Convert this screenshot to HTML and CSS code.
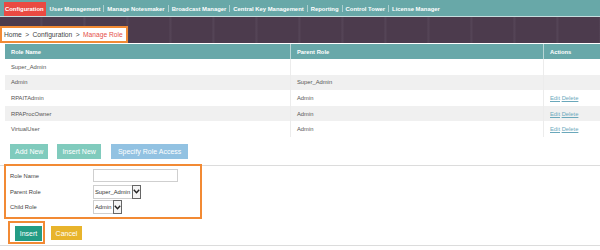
FILE: index.html
```html
<!DOCTYPE html>
<html>
<head>
    <title>Manage Role</title>
    <link rel="stylesheet" href="styles.css">
</head>
<body>
    <nav class="topnav">
        <a href="#" class="active">Configuration</a>
        <a href="#">User Management</a>
        <span class="sep"></span>
        <a href="#">Manage Notesmaker</a>
        <span class="sep"></span>
        <a href="#">Broadcast Manager</a>
        <span class="sep"></span>
        <a href="#">Central Key Management</a>
        <span class="sep"></span>
        <a href="#">Reporting</a>
        <span class="sep"></span>
        <a href="#">Control Tower</a>
        <span class="sep"></span>
        <a href="#">License Manager</a>
    </nav>

    <div class="banner">
        <div class="breadcrumb">
            <span>Home</span><span class="arrow">&gt;</span><span>Configuration</span><span class="arrow">&gt;</span><span class="current">Manage Role</span>
        </div>
    </div>

    <table class="roles">
        <thead>
            <tr>
                <th class="col-name">Role Name</th>
                <th class="col-parent">Parent Role</th>
                <th class="col-actions">Actions</th>
            </tr>
        </thead>
        <tbody>
            <tr>
                <td>Super_Admin</td>
                <td></td>
                <td></td>
            </tr>
            <tr>
                <td>Admin</td>
                <td>Super_Admin</td>
                <td></td>
            </tr>
            <tr>
                <td>RPAITAdmin</td>
                <td>Admin</td>
                <td><a href="#">Edit</a> <a href="#">Delete</a></td>
            </tr>
            <tr>
                <td>RPAProcOwner</td>
                <td>Admin</td>
                <td><a href="#">Edit</a> <a href="#">Delete</a></td>
            </tr>
            <tr>
                <td>VirtualUser</td>
                <td>Admin</td>
                <td><a href="#">Edit</a> <a href="#">Delete</a></td>
            </tr>
        </tbody>
    </table>

    <div class="toolbar">
        <button class="btn btn-mint">Add New</button>
        <button class="btn btn-mint">Insert New</button>
        <button class="btn btn-sky">Specify Role Access</button>
    </div>

    <div class="form-section">
        <div class="role-form">
            <label for="role-name">Role Name</label>
            <input type="text" id="role-name">

            <label for="parent-role">Parent Role</label>
            <div class="pick">
                <select id="parent-role">
                    <option>Super_Admin</option>
                    <option>Admin</option>
                </select>
                <span class="pick-arrow"><svg width="7" height="5" viewBox="0 0 7 5"><path d="M0.8 0.8 L3.5 3.8 L6.2 0.8" fill="none" stroke="#222" stroke-width="1.4"/></svg></span>
            </div>

            <label for="child-role">Child Role</label>
            <div class="pick">
                <select id="child-role">
                    <option>Admin</option>
                </select>
                <span class="pick-arrow"><svg width="7" height="5" viewBox="0 0 7 5"><path d="M0.8 0.8 L3.5 3.8 L6.2 0.8" fill="none" stroke="#222" stroke-width="1.4"/></svg></span>
            </div>
        </div>
    </div>

    <div class="actions-bar">
        <div class="insert-frame">
            <button class="btn btn-teal">Insert</button>
        </div>
        <button class="btn btn-gold">Cancel</button>
    </div>
</body>
</html>
```

FILE: styles.css
```css
body {
    margin: 0;
    font-family: "Liberation Sans", Arial, sans-serif;
    background-color: #fff;
    color: #555;
}

/* top navigation */
.topnav {
    display: flex;
    height: 14px;
    padding: 2px 0 0 4px;
    background-color: #68a8a8;
    border-bottom: 1px solid #c6dede;
}

.topnav a {
    display: flex;
    align-items: center;
    padding: 0 3px;
    font-size: 5.9px;
    font-weight: bold;
    color: #fff;
    text-decoration: none;
    white-space: nowrap;
}

.topnav a.active {
    padding: 0 2px 0 1px;
    margin-right: 1px;
    background-color: #ea4a42;
}

.topnav .sep {
    align-self: center;
    width: 1px;
    height: 7px;
    margin-top: -1px;
    background-color: rgba(255, 255, 255, 0.45);
}

/* dark banner with breadcrumb */
.banner {
    display: flex;
    align-items: flex-end;
    height: 26px;
    background-color: #4e3d4f;
    background-image: repeating-linear-gradient(90deg, #4c3b4d 0, #4c3b4d 40px, #564658 41px, #4e3d4f 43px);
}

.breadcrumb {
    display: flex;
    align-items: center;
    height: 13px;
    padding: 0 3px 0 2px;
    background-color: #fff;
    border: 2px solid #f28a34;
    font-size: 6.7px;
    color: #444;
}

.breadcrumb .arrow {
    padding: 0 3.4px;
}

.breadcrumb .current {
    color: #e5504a;
}

/* roles table */
.roles {
    width: 595px;
    margin: 1px 0 0 5px;
    border-collapse: collapse;
    font-size: 5.8px;
}

.roles th {
    height: 15px;
    padding: 0 6px;
    background-color: #68a8a9;
    color: #fff;
    font-weight: bold;
    text-align: left;
    border-left: 1px solid #b9d6d6;
}

.roles th:first-child,
.roles td:first-child {
    border-left: none;
}

.roles .col-name {
    width: 273px;
}

.roles .col-parent {
    width: 240px;
}

.roles td {
    height: 15.6px;
    padding: 0 6px;
    border-left: 1px solid #ececec;
    color: #555;
}

.roles tbody tr:nth-child(even) td {
    background-color: #f0f0f0;
}

.roles td a {
    color: #6aa8bb;
}

/* buttons */
.toolbar {
    display: flex;
    gap: 9px;
    padding: 7px 0 0 10px;
    height: 15px;
}

.btn {
    height: 15px;
    padding: 0 5px;
    border: none;
    font-family: "Liberation Sans", Arial, sans-serif;
    font-size: 7px;
    color: #fff;
    cursor: pointer;
}

.btn-mint {
    background-color: #80cbbd;
}

.btn-sky {
    margin-left: 1px;
    padding: 0 7px;
    background-color: #92c2e2;
}

.btn-teal {
    width: 27px;
    padding: 0;
    background-color: #239c84;
}

.btn-gold {
    width: 31px;
    height: 14px;
    padding: 0;
    margin-top: 5px;
    background-color: #e8b42c;
}

/* role form */
.form-section {
    margin-top: 6px;
    border-top: 1px solid #dcdcdc;
}

.role-form {
    display: grid;
    grid-template-columns: 83px auto;
    grid-auto-rows: 15.7px;
    align-items: center;
    width: 186px;
    margin: -2px 0 0 4px;
    padding: 2px 4px 2px 4px;
    border: 2px solid #f28a34;
    font-size: 5.8px;
    color: #444;
}

.role-form input[type="text"] {
    width: 85px;
    height: 13px;
    box-sizing: border-box;
    border: 1px solid #cfcfcf;
    padding: 0 2px;
}

.pick {
    display: flex;
    align-items: stretch;
    height: 14px;
    justify-self: start;
}

.pick select {
    appearance: none;
    -webkit-appearance: none;
    border: 1px solid #cfcfcf;
    border-right: none;
    background-color: #fff;
    padding: 0 1px;
    font-family: "Liberation Sans", Arial, sans-serif;
    font-size: 5.8px;
    color: #333;
    border-radius: 0;
}

.pick-arrow {
    display: flex;
    align-items: center;
    justify-content: center;
    width: 7px;
    border: 1px solid #666;
    background-color: #f4f4f4;
}

.actions-bar {
    display: flex;
    gap: 6px;
    height: 23px;
    padding: 2px 0 1px 8px;
    border-bottom: 1px solid #dcdcdc;
}

.insert-frame {
    display: flex;
    padding: 3px 1px 2px 5px;
    border: 2px solid #f28a34;
}
```
